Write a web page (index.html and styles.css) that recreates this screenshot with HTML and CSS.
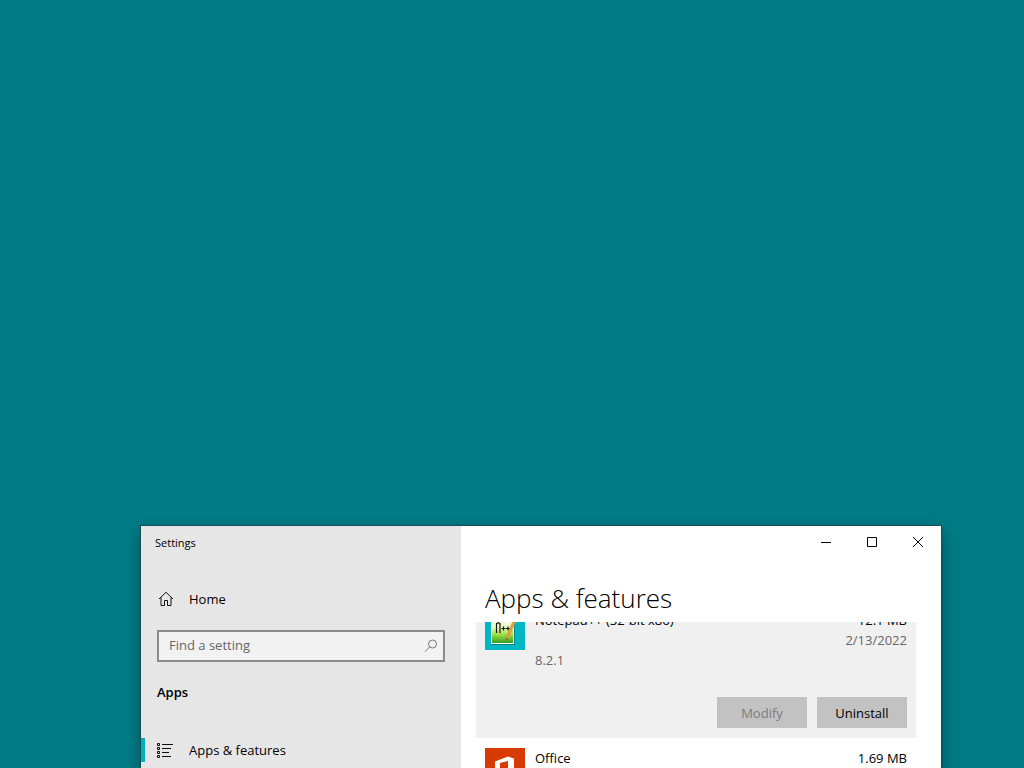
FILE: index.html
```html
<!DOCTYPE html>
<html lang="en">
<head>
<meta charset="utf-8">
<title>Settings</title>
<link rel="stylesheet" href="styles.css">
</head>
<body>
<main class="desktop">
  <section class="window" aria-label="Settings">
    <aside class="sidebar">
      <header class="window-title">Settings</header>
      <a class="nav-link" href="#home">
        <svg class="nav-icon" viewBox="0 0 16 16" aria-hidden="true"><path d="M1 8 8 1.300 15 8M3 6.500v8h3.500v-5h3v5H13v-8"/></svg>
        Home
      </a>
      <div class="search">
        <input class="search-input" type="search" placeholder="Find a setting" aria-label="Find a setting">
        <svg class="search-icon" viewBox="0 0 14 14" aria-hidden="true"><circle cx="8.500" cy="5" r="4"/><path d="M5.700 7.800 1 12.800"/></svg>
      </div>
      <h2 class="group-title">Apps</h2>
      <a class="nav-link selected" href="#apps">
        <svg class="nav-icon list-icon" viewBox="0 0 16 16" aria-hidden="true"><path d="M.5 1.500h2v2h-2zM.5 5.500h2v2h-2zM.5 9.500h2v2h-2zM.5 13.500h2v2h-2zM5 2.500h11M5 6.500h9M5 10.500h7M5 14.500h9"/></svg>
        Apps &amp; features
      </a>
    </aside>
    <div class="content">
      <div class="controls">
        <button class="control" aria-label="Minimize"><svg viewBox="0 0 12 12"><path d="M1 6.500h10"/></svg></button>
        <button class="control" aria-label="Maximize"><svg viewBox="0 0 12 12"><path d="M1.500 1.500h9v9h-9z"/></svg></button>
        <button class="control" aria-label="Close"><svg viewBox="0 0 12 12"><path d="m1 1 10 10M11 1 1 11"/></svg></button>
      </div>
      <h1 class="page-title">Apps &amp; features</h1>
      <div class="viewport">
        <ul class="app-list">
          <li class="app expanded">
            <svg class="app-icon" viewBox="0 0 40 40" aria-hidden="true">
              <defs><linearGradient id="paper" x2="0" y2="1"><stop offset="0" stop-color="#fff"/><stop offset=".4" stop-color="#e9fbc0"/><stop offset=".65" stop-color="#a5e04a"/><stop offset="1" stop-color="#2f9a1c"/></linearGradient></defs>
              <path fill="#00b7c3" d="M0 0h40v40H0z"/>
              <path fill="url(#paper)" stroke="#fff" d="M6.500 6.500h22v27h-22z"/>
              <path fill="none" stroke="#222" d="M6 34.500h23.500V10" opacity=".35"/>
              <path fill="none" stroke="#111" stroke-width="1.200" d="M11.500 23v-9.500q3-1.500 3.500.500v9M16.500 18.500h4M18.500 16.500v4M21 18.500h4M23 16.500v4"/>
              <path fill="#dca043" d="m28 10 3 1.500-7 16-3 3 .5-5z"/><path fill="#7a5a24" d="m21.500 27.500 1.500 1-2.500 2.500z"/>
            </svg>
            <div class="details">
              <div class="line"><span>Notepad++ (32-bit x86)</span><span>12.1 MB</span></div>
              <div class="line date">2/13/2022</div>
              <div class="line muted">8.2.1</div>
              <div class="actions"><button class="action" disabled>Modify</button><button class="action">Uninstall</button></div>
            </div>
          </li>
          <li class="app">
            <svg class="app-icon" viewBox="0 0 40 40" aria-hidden="true"><path fill="#d83b01" d="M0 0h40v40H0z"/><path fill="#fff" fill-rule="evenodd" d="M10 13.500 23 8.500l6 2v20l-6 2-13-5 13 1.500V13l-8 2v10l-5 2.500z"/></svg>
            <div class="details">
              <div class="line"><span>Office</span><span>1.69 MB</span></div>
            </div>
          </li>
        </ul>
      </div>
    </div>
  </section>
</main>
</body>
</html>
```
FILE: styles.css
```css
* { box-sizing: border-box; }
body { margin: 0; font: 13px/20px "Open Sans", "Noto Sans", sans-serif; color: #000; }
.desktop { position: relative; height: 100vh; overflow: hidden; background: #007b85; }
.window {
  position: absolute; top: 526px; left: 141px; width: 800px; height: 600px;
  display: grid; grid-template-columns: 2fr 3fr;
  background: #fff; outline: 1px solid #164e53; box-shadow: 0 5px 14px rgba(0, 0, 0, .4);
}
.sidebar { background: #e6e6e6; }
.window-title { height: 53px; padding: 7px 14px; font-size: 11px; }
.nav-link { display: flex; align-items: center; gap: 15px; height: 40px; padding: 0 17px; color: inherit; text-decoration: none; }
.nav-icon { width: 16px; height: 16px; fill: none; stroke: #111; }
.list-icon { margin: 0 1px 0 -1px; }
.search { position: relative; margin: 11px 16px 20px; }
.search-input {
  display: block; width: 100%; height: 32px; padding: 0 36px 2px 10px;
  border: 2px solid #8b8b8b; border-radius: 0; background: #f2f2f2; font: inherit; appearance: none;
}
.search-input::placeholder { color: #666; opacity: 1; }
.search-icon { position: absolute; right: 7px; top: 9px; width: 14px; height: 14px; fill: none; stroke: #777; }
.group-title { margin: 0 16px 28px; font-size: 13px; line-height: 20px; font-weight: 600; }
.selected { background: linear-gradient(#00b0b9, #00b0b9) 0 50% / 4px 24px no-repeat; }
.content { display: flex; flex-direction: column; min-width: 0; }
.controls { display: flex; justify-content: flex-end; height: 32px; }
.control { display: grid; place-items: center; width: 46px; padding: 0; border: 0; background: none; }
.control svg { width: 12px; height: 12px; fill: none; stroke: #000; }
.page-title { margin: 22px 24px 6px; font-size: 26px; line-height: 36px; font-weight: 300; }
.viewport { flex: 1; min-height: 0; margin: 0 25px 0 15px; overflow: hidden; }
.app-list { margin: -22px 0 0; padding: 0; list-style: none; }
.app { display: flex; gap: 10px; padding: 10px 9px; }
.expanded { background: #f0f0f0; }
.app-icon { flex: none; width: 40px; height: 40px; }
.details { flex: 1; }
.line { display: flex; justify-content: space-between; }
.date { justify-content: flex-end; color: #666; }
.muted { color: #666; }
.actions { display: flex; justify-content: flex-end; gap: 10px; margin-top: 27px; }
.action { width: 90px; height: 31px; padding: 0; border: 0; background: #c2c2c2; color: #000; font: inherit; }
.action:disabled { color: #7c7c7c; }
```
